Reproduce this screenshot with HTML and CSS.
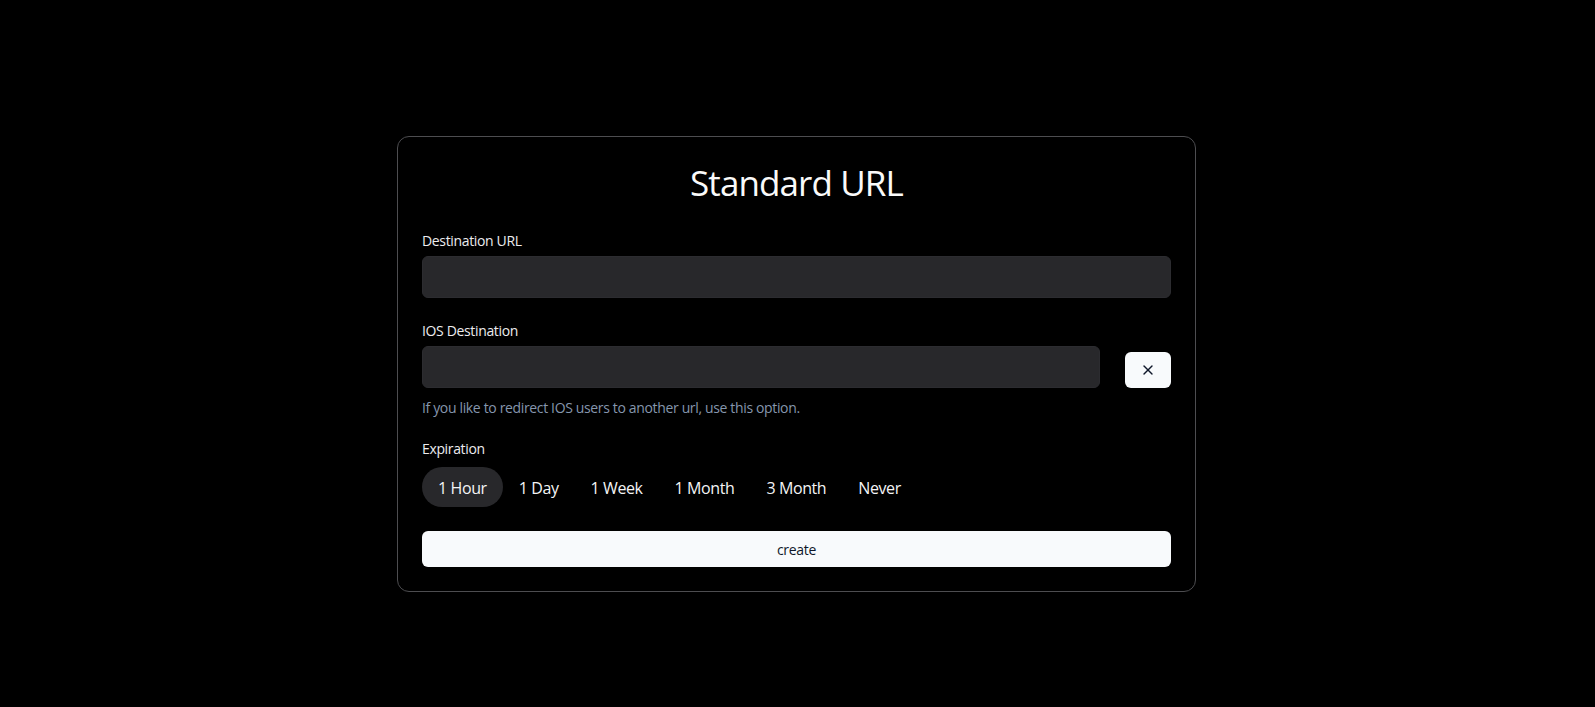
FILE: index.html
```html
<!DOCTYPE html>
<html lang="en">
<head>
<meta charset="utf-8">
<title>Standard URL</title>
<link rel="stylesheet" href="styles.css">
</head>
<body>
<main class="page">
  <form class="card">
    <h1 class="title">Standard URL</h1>

    <div class="field">
      <label class="label">Destination URL</label>
      <input class="input" type="text">
    </div>

    <div class="field field-ios">
      <label class="label">IOS Destination</label>
      <div class="row">
        <input class="input input-grow" type="text">
        <button type="button" class="icon-btn" aria-label="remove">
          <svg width="16" height="16" viewBox="0 0 24 24" fill="none" stroke="currentColor" stroke-width="2" stroke-linecap="round" stroke-linejoin="round"><path d="M18 6 6 18"/><path d="m6 6 12 12"/></svg>
        </button>
      </div>
      <p class="hint">If you like to redirect IOS users to another url, use this option.</p>
    </div>

    <div class="field field-exp">
      <label class="label label-exp">Expiration</label>
      <div class="tabs">
        <button type="button" class="tab active">1 Hour</button>
        <button type="button" class="tab">1 Day</button>
        <button type="button" class="tab">1 Week</button>
        <button type="button" class="tab">1 Month</button>
        <button type="button" class="tab">3 Month</button>
        <button type="button" class="tab">Never</button>
      </div>
    </div>

    <button type="button" class="submit">create</button>
  </form>
</main>
</body>
</html>
```

FILE: styles.css
```css
* { box-sizing: border-box; }
html, body {
  margin: 0;
  padding: 0;
  background: #000;
  height: 100%;
}
body {
  font-family: "Open Sans", "Noto Sans", sans-serif;
  color: #f4f4f5;
}
.page {
  display: flex;
  justify-content: center;
  padding-top: 136px;
  padding-right: 2px;
}
.card {
  width: 799px;
  border: 1px solid #4d4d50;
  border-radius: 12px;
  padding: 26px 24px 24px 24px;
  display: flex;
  flex-direction: column;
  margin: 0;
}
.title {
  margin: 0 0 28px;
  text-align: center;
  font-size: 35px;
  line-height: 40px;
  font-weight: 400;
  color: #fafafa;
  letter-spacing: -0.9px;
}
.field {
  display: flex;
  flex-direction: column;
}
.field-ios { margin-top: 23px; }
.field-exp { margin-top: 21px; }
.label {
  font-size: 14px;
  line-height: 20px;
  color: #ececef;
  margin-bottom: 5px;
  letter-spacing: -0.35px;
}
.label-exp { margin-bottom: 8px; }
.input {
  height: 42px;
  width: 100%;
  background: #28282b;
  border: 1px solid #2c2c30;
  border-radius: 6px;
  outline: none;
  color: #fff;
  padding: 0 12px;
  font: inherit;
}
.row {
  display: flex;
  align-items: flex-end;
  gap: 25px;
}
.input-grow { flex: 1; }
.icon-btn {
  width: 46px;
  height: 36px;
  flex: none;
  border: none;
  border-radius: 6px;
  background: #f8fafc;
  color: #0f172a;
  display: flex;
  align-items: center;
  justify-content: center;
  padding: 0;
}
.hint {
  margin: 10px 0 0;
  font-size: 14px;
  line-height: 20px;
  color: #8596ad;
  letter-spacing: -0.35px;
}
.tabs {
  display: flex;
}
.tab {
  height: 40px;
  padding: 1px 16px 0;
  border: none;
  border-radius: 999px;
  background: transparent;
  color: #f4f4f5;
  font-family: inherit;
  font-size: 16px;
  letter-spacing: -0.4px;
}
.tab.active { background: #28282b; }
.submit {
  margin-top: 24px;
  height: 36px;
  width: 100%;
  border: none;
  border-radius: 6px;
  background: #f8fafc;
  color: #0f172a;
  font-family: inherit;
  font-size: 14px;
  letter-spacing: -0.3px;
}
```
